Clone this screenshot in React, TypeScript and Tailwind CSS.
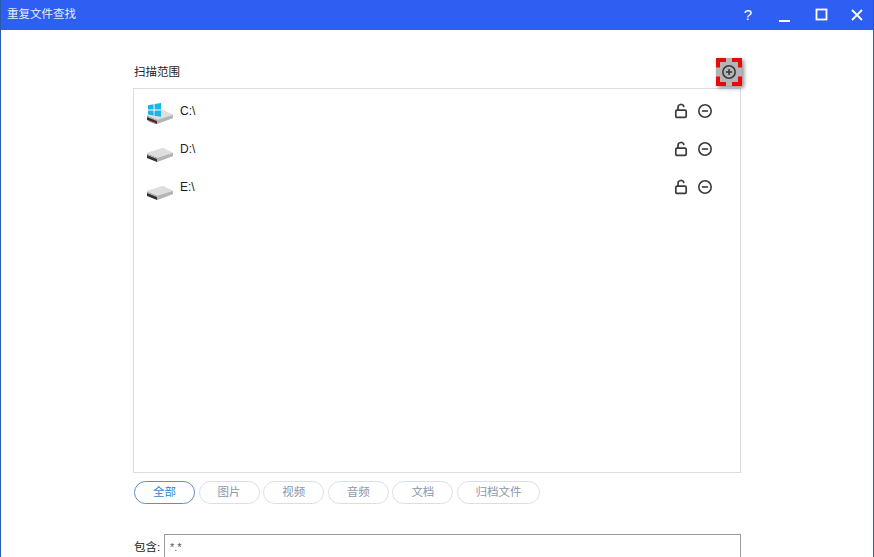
import React from 'react';

const cjk = { fontFamily: '"Liberation Sans", "Noto Sans CJK SC", sans-serif' };

const drives = [
  { name: 'C:\\', system: true },
  { name: 'D:\\', system: false },
  { name: 'E:\\', system: false },
];

const tabs = ['全部', '图片', '视频', '音频', '文档', '归档文件'];

const DriveIcon = ({ system }: { system: boolean }) => (
  <svg width="28" height="24" viewBox="0 0 28 24" className="shrink-0">
    <path d="M1 14 L17 9 L27 14 L27 17 L11 23 L1 18 Z" fill="#d4d4d4" />
    <path d="M1 14 L17 9 L27 14 L11 19 Z" fill="#dedede" />
    <path d="M1 15 L11 19 L11 23 L1 19 Z" fill="#333333" />
    <path d="M1 15 L11 19 L11 20 L1 16 Z" fill="#c8c8c8" />
    <path d="M11 19 L27 14 L27 17 L11 23 Z" fill="#b4b4b4" />
    {system && (
      <g>
        <path d="M2 4.2 L7.6 3.2 V8.4 H2 Z" fill="#19b5e6" />
        <path d="M8.6 3 L15 2 V8.4 H8.6 Z" fill="#19b5e6" />
        <path d="M2 9.4 H7.6 V14.6 L2 13.6 Z" fill="#19b5e6" />
        <path d="M8.6 9.4 H15 V15.8 L8.6 14.8 Z" fill="#19b5e6" />
        <path d="M3 20 L10 22.6" stroke="#e85a8a" strokeWidth="1" />
      </g>
    )}
  </svg>
);

const UnlockIcon = () => (
  <svg width="16" height="16" viewBox="0 0 16 16" fill="none" stroke="#3a3a3a" strokeWidth="1.7">
    <rect x="2.8" y="7.2" width="10.4" height="7.2" rx="1.2" />
    <path d="M5 7 V4.2 A3 3 0 0 1 10.8 3.4" strokeLinecap="round" />
  </svg>
);

const CircleIcon = ({ plus = false }: { plus?: boolean }) => (
  <svg width="16" height="16" viewBox="0 0 16 16" fill="none" stroke="#3a3a3a" strokeWidth="1.6">
    <circle cx="8" cy="8" r="6.2" />
    <path d="M4.9 8 H11.1" />
    {plus && <path d="M8 4.9 V11.1" />}
  </svg>
);

export default function App() {
  return (
    <div className="w-[874px] h-[557px] overflow-hidden bg-white flex flex-col border-x border-[#2a5aa8]" style={cjk}>
      <div className="h-[30px] shrink-0 bg-[#2f5ff2] flex items-center justify-between text-white">
        <span className="pl-[6px] text-[11.5px] text-[#e8eeff]">重复文件查找</span>
        <div className="flex items-center">
          <span className="w-[20px] text-center text-[15px] mr-[20px]">?</span>
          <svg width="14" height="14" viewBox="0 0 14 14" className="mr-[23px] mt-[6px]" stroke="white" strokeWidth="2">
            <path d="M1 10 H12" />
          </svg>
          <svg width="14" height="14" viewBox="0 0 14 14" fill="none" className="mr-[21px]" stroke="white" strokeWidth="1.8">
            <rect x="1.5" y="1.5" width="10" height="10" />
          </svg>
          <svg width="14" height="14" viewBox="0 0 14 14" className="mr-[9px]" stroke="white" strokeWidth="1.8">
            <path d="M2 2 L12 12 M12 2 L2 12" />
          </svg>
        </div>
      </div>

      <div className="flex-1 flex flex-col pl-[132px] pr-[132px]">
        <div className="h-[58px] shrink-0 flex items-end justify-between relative">
          <span className="text-[11.5px] text-[#222] leading-[16px] mb-[8px] ml-[1px]">扫描范围</span>
          <div className="absolute right-[-1px] top-[28px] w-[26px] h-[28px] bg-[#b4b4b8] shadow-[2px_2px_4px_rgba(0,0,0,0.45)] flex items-center justify-center">
            <svg width="26" height="28" viewBox="0 0 26 28" fill="none" stroke="#e60a0a" strokeWidth="4" className="absolute inset-0">
              <path d="M2 9.5 V2 H10 M16 2 H24 V9.5 M24 18.5 V26 H16 M10 26 H2 V18.5" />
            </svg>
            <CircleIcon plus />
          </div>
        </div>

        <div className="h-[385px] shrink-0 border border-[#d8dde9] pt-[5px]">
          {drives.map((d) => (
            <div key={d.name} className="h-[38px] flex items-center pl-[12px] pr-[27px]">
              <DriveIcon system={d.system} />
              <span className="ml-[6px] text-[12px] text-[#222] -mt-[4px]">{d.name}</span>
              <div className="ml-auto flex items-center gap-[8px] -mt-[4px]">
                <UnlockIcon />
                <CircleIcon />
              </div>
            </div>
          ))}
        </div>

        <div className="flex gap-[3.6px] mt-[8px] ml-[1px] shrink-0">
          {tabs.map((t, i) => (
            <div
              key={t}
              className={
                i === 0
                  ? 'h-[23px] w-[61px] rounded-full border-[1.5px] border-[#5f8fc8] text-[#3d7fd0] text-[11.5px] flex items-center justify-center'
                  : i === 5
                    ? 'h-[23px] w-[83px] rounded-full border-[1.5px] border-[#d9dfea] text-[#8a97ad] text-[11.5px] flex items-center justify-center'
                    : 'h-[23px] w-[61px] rounded-full border-[1.5px] border-[#d9dfea] text-[#8a97ad] text-[11.5px] flex items-center justify-center'
              }
            >
              {t}
            </div>
          ))}
        </div>

        <div className="flex mt-[30px] shrink-0">
          <span className="text-[11.5px] text-[#222] ml-[1px] w-[30px] pt-[5px]">包含:</span>
          <div className="flex-1 h-[30px] border border-[#9a9a9a] pl-[5px] pt-[4px] text-[11px] text-[#555]">*.*</div>
        </div>
      </div>
    </div>
  );
}
